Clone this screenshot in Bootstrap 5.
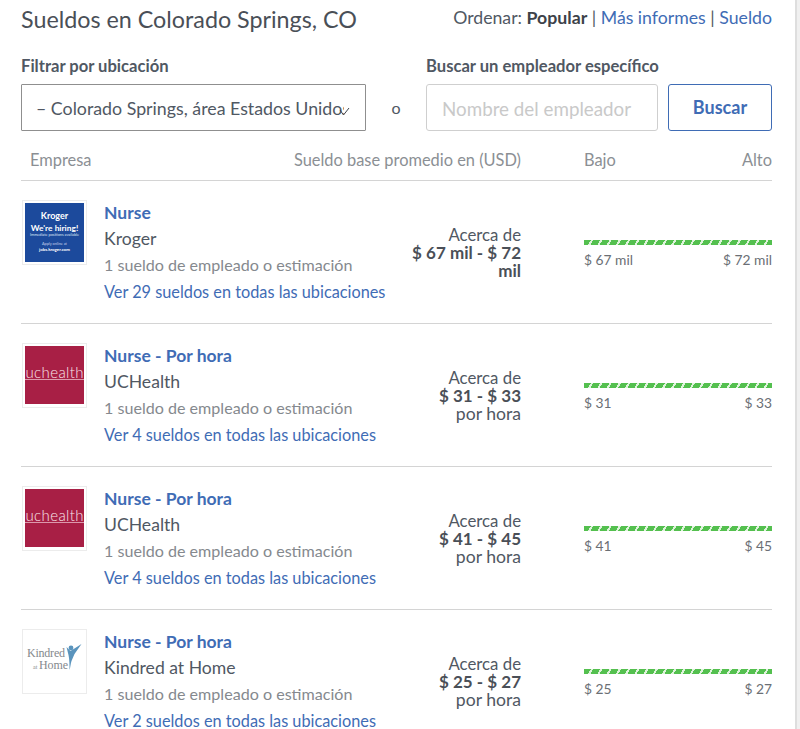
<!DOCTYPE html>
<html lang="es">
  <head>
    <meta charset="UTF-8" />
    <title>Sueldos en Colorado Springs, CO</title>
    <link
      rel="stylesheet"
      href="https://cdn.jsdelivr.net/npm/bootstrap@5.3.0/dist/css/bootstrap.min.css"
    />
    <style>
      html, body { height: 729px; overflow: hidden; }
      body { font-family: Lato, "Liberation Sans", sans-serif; color: #505863; background: #f0f0f0; font-size: 16px; }
      a { color: #3f6cb5; text-decoration: none; }
      .page-wrap { width: 795px; height: 729px; padding: 4px 23px 0 21px; background: #fff; overflow: hidden; box-shadow: 2px 0 0 #dedede; }
      .page-title { font-size: 23.3px; font-weight: 400; line-height: 30px; margin: 0; color: #4a4f57; }
      .sort-line { font-size: 17.7px; line-height: 20px; margin-top: 4px; color: #505863; }
      .sort-line b { color: #3d4249; }
      .filter-row { margin-top: 22px; }
      .field-label { font-size: 16.6px; font-weight: 700; line-height: 20px; color: #505863; margin-bottom: 8px; display: block; }
      .loc-select { width: 345px; height: 47px; border: 1px solid #8f8f8f; border-radius: 1px; padding: 0 21px 0 15px; font-size: 17.8px; line-height: 46px; color: #505863; }
      .loc-text { display: block; margin-left: -1px; white-space: nowrap; overflow: hidden; }
      .loc-select svg { position: absolute; right: 15px; top: 22px; }
      .or-text { width: 61px; text-align: center; font-size: 16px; line-height: 47px; }
      .emp-input { width: 232px; height: 47px; border-radius: 3px; border: 1px solid #cfcfcf; padding: 2px 15px 0; font-size: 18.8px; color: #505863; font-family: inherit; }
      .emp-input::placeholder { color: #c9c9c9; opacity: 1; }
      .buscar-btn { width: 104px; height: 47px; margin-left: 10px; border: 1px solid #3f6cb5; border-radius: 3px; background: #fff; color: #3f6cb5; font-size: 18px; font-weight: 700; padding: 0; }
      .buscar-btn:hover { background: #fff; color: #3f6cb5; border-color: #3f6cb5; }
      .col-head { height: 39px; margin-top: 11px; padding: 8px 0 0 9px; font-size: 16.4px; line-height: 20px; color: #8b8f94; border-bottom: 1px solid #d4d4d4; }
      .col-name { flex: 1; }
      .col-range { margin-left: 63px; width: 188px; flex: none; }
      .job-row { height: 143px; border-bottom: 1px solid #d4d4d4; padding-top: 19px; }
      .logo-box { width: 65px; height: 65px; flex: none; margin-left: 1px; border: 1px solid #ececec; padding: 2px; }
      .logo-fill { width: 100%; height: 100%; display: block; }
      .job-info { width: 300px; margin-left: 17px; flex: none; }
      .job-title { font-size: 17.5px; font-weight: 700; line-height: 26px; display: block; }
      .job-company { font-size: 17.6px; line-height: 26px; color: #505863; }
      .job-count { font-size: 16.1px; line-height: 26px; color: #85898e; }
      .job-link { font-size: 16.3px; line-height: 28px; display: block; white-space: nowrap; }
      .pay-box { width: 112px; flex: none; text-align: right; margin-left: 5px; padding-top: 26px; font-size: 16.8px; line-height: 18px; color: #505863; }
      .pay-box b { font-size: 17px; color: #4a4f57; display: block; }
      .pay-unit { font-size: 17.6px; }
      .range-box { margin-left: 63px; flex: 1; padding-top: 40px; }
      .range-bar { height: 5px; background: repeating-linear-gradient(120deg, #54c04f 0 6px, #dff3dc 6px 8px); }
      .range-ends { font-size: 13.8px; line-height: 18px; margin-top: 6px; color: #6b6f75; }
    </style>
  </head>
  <body>
    <div class="page-wrap">
      <div class="d-flex justify-content-between align-items-start">
        <h1 class="page-title">Sueldos en Colorado Springs, CO</h1>
        <div class="sort-line">Ordenar: <b>Popular</b> | <a href="#">Más informes</a> | <a href="#">Sueldo</a></div>
      </div>

      <div class="d-flex filter-row">
        <div>
          <label class="field-label">Filtrar por ubicación</label>
          <div class="loc-select position-relative">
            <span class="loc-text">– Colorado Springs, área Estados Unidos</span>
            <svg width="11" height="9" viewBox="0 0 11 9"><path d="M1 3l3.5 5L10 1" fill="none" stroke="#3d4249" stroke-width="1"/></svg>
          </div>
        </div>
        <div class="or-text align-self-end">o</div>
        <div>
          <label class="field-label">Buscar un empleador específico</label>
          <div class="d-flex">
            <input class="emp-input" type="text" placeholder="Nombre del empleador" />
            <button type="button" class="btn buscar-btn">Buscar</button>
          </div>
        </div>
      </div>

      <div class="d-flex col-head">
        <div class="col-name">Empresa</div>
        <div>Sueldo base promedio en (USD)</div>
        <div class="d-flex justify-content-between col-range"><span>Bajo</span><span>Alto</span></div>
      </div>

      <div id="rows"></div>
    </div>

    <script>
      const kroger = `<svg class="logo-fill" viewBox="0 0 59 59"><rect width="59" height="59" fill="#1c4a9c"/>
        <text x="29.5" y="16" font-size="9" font-weight="700" fill="#fff" text-anchor="middle" font-family="Lato">Kroger</text>
        <text x="29.5" y="28" font-size="8.4" font-weight="700" fill="#fff" text-anchor="middle" font-family="Lato">We're hiring!</text>
        <text x="29.5" y="33" font-size="3.8" fill="#dfe7f5" text-anchor="middle" font-family="Lato">Immediate positions available</text>
        <text x="29.5" y="42" font-size="3.8" fill="#c8d5ec" text-anchor="middle" font-family="Lato">Apply online at</text>
        <text x="29.5" y="48" font-size="4.4" font-weight="700" fill="#fff" text-anchor="middle" font-family="Lato">jobs.kroger.com</text></svg>`;
      const uchealth = `<svg class="logo-fill" viewBox="0 0 59 59"><rect width="59" height="59" fill="#fff"/><rect width="59" height="58" fill="#a81f45"/>
        <text x="0.5" y="32" font-size="15" font-weight="300" fill="#f9e6eb" textLength="58" font-family="Lato">uchealth</text>
        <rect x="0" y="33" width="59" height="0.7" fill="#f3cdd7"/></svg>`;
      const kindred = `<svg class="logo-fill" viewBox="0 0 59 59"><rect width="59" height="59" fill="#fff"/>
        <text x="2" y="25" font-size="12" fill="#85898d" textLength="38" font-family="Liberation Serif">Kindred</text>
        <text x="8" y="37" font-size="6" fill="#85898d" font-family="Liberation Serif">at</text>
        <text x="14" y="37" font-size="12" fill="#85898d" textLength="29" font-family="Liberation Serif">Home</text>
        <circle cx="46" cy="16" r="2.4" fill="#5a94bd"/>
        <path d="M44.5 38c0-6 0-10-1-15l-2-8 4 4 11-7-7 10-3 7c-1 3-1 6-2 9z" fill="#5a94bd"/></svg>`;

      const jobs = [
        { logo: kroger, title: "Nurse", company: "Kroger", count: 29, pay: "$ 67 mil - $ 72 mil", low: "$ 67 mil", high: "$ 72 mil" },
        { logo: uchealth, title: "Nurse - Por hora", company: "UCHealth", count: 4, pay: "$ 31 - $ 33", unit: "por hora", low: "$ 31", high: "$ 33" },
        { logo: uchealth, title: "Nurse - Por hora", company: "UCHealth", count: 4, pay: "$ 41 - $ 45", unit: "por hora", low: "$ 41", high: "$ 45" },
        { logo: kindred, title: "Nurse - Por hora", company: "Kindred at Home", count: 2, pay: "$ 25 - $ 27", unit: "por hora", low: "$ 25", high: "$ 27" },
      ];

      document.getElementById("rows").innerHTML = jobs
        .map(
          (j) => `
        <div class="d-flex job-row">
          <div class="logo-box">${j.logo}</div>
          <div class="job-info">
            <a class="job-title" href="#">${j.title}</a>
            <div class="job-company">${j.company}</div>
            <div class="job-count">1 sueldo de empleado o estimación</div>
            <a class="job-link" href="#">Ver ${j.count} sueldos en todas las ubicaciones</a>
          </div>
          <div class="pay-box">Acerca de<b>${j.pay}</b><span class="pay-unit">${j.unit || ""}</span></div>
          <div class="range-box">
            <div class="range-bar"></div>
            <div class="d-flex justify-content-between range-ends"><span>${j.low}</span><span>${j.high}</span></div>
          </div>
        </div>`
        )
        .join("");
    </script>
    <script src="https://cdn.jsdelivr.net/npm/bootstrap@5.3.0/dist/js/bootstrap.bundle.min.js"></script>
  </body>
</html>
